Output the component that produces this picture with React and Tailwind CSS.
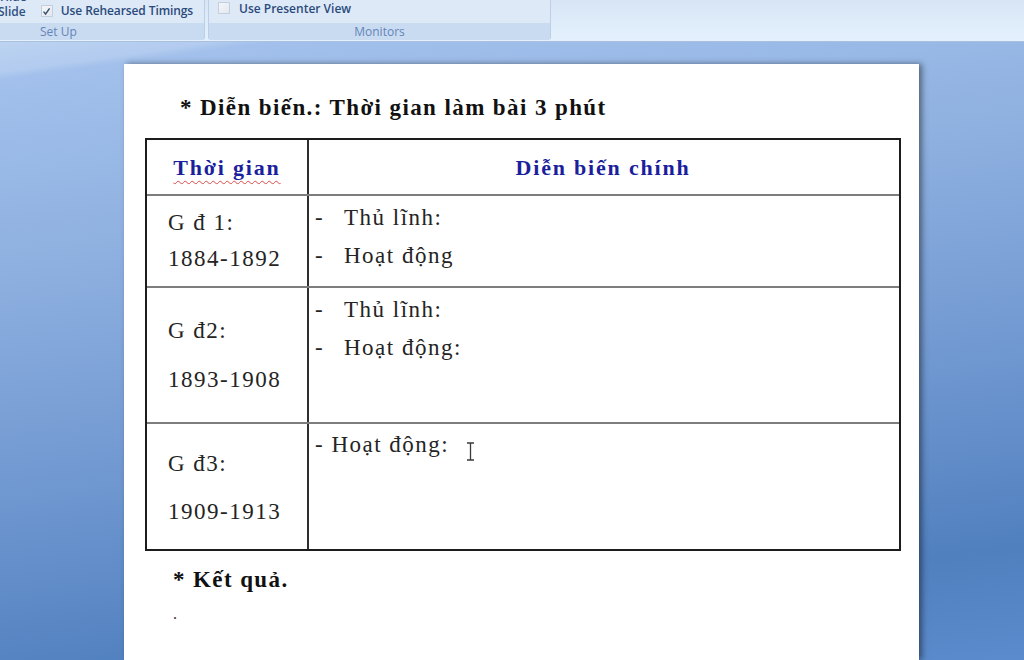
import React from "react";

const serif = { fontFamily: '"Liberation Serif", "Times New Roman", serif' };

function CheckBox({ checked }) {
  return (
    <span className="inline-flex h-[12px] w-[12px] items-center justify-center border border-[#c5cfdc] bg-gradient-to-br from-[#f4f6f9] to-[#e3e8ef]">
      {checked && (
        <svg width="9" height="9" viewBox="0 0 9 9" fill="none">
          <path d="M1.5 4.6 L3.6 7 L7.6 1.4" stroke="#3a4d6a" strokeWidth="1.4" />
        </svg>
      )}
    </span>
  );
}

function Ribbon() {
  return (
    <div
      className="h-[42px] flex bg-gradient-to-b from-[#d8e5f5] to-[#e4f1fd] border-b border-[#a9c0de] text-[12px] text-[#2b4a7c]"
      style={{ fontFamily: '"Open Sans", "Noto Sans", sans-serif' }}
    >
      <div className="w-[205px] h-[40px] flex flex-col border-r border-[#bccfe6] rounded-br-[3px] bg-[#dde9f7] overflow-hidden">
        <div className="h-[23px] flex items-start">
          <div className="flex flex-col leading-[15px] mt-[-11px] font-semibold text-[#30507f]">
            <span>Hide</span>
            <span className="ml-[-2px]">Slide</span>
          </div>
          <div className="flex items-center ml-[14px] mt-[2px]">
            <CheckBox checked />
            <span className="ml-[8px] font-semibold tracking-[-0.1px]">Use Rehearsed Timings</span>
          </div>
        </div>
        <div className="flex-1 bg-[#c9dbf0] pl-[40px] leading-[17px] text-[#6585b8]">Set Up</div>
      </div>
      <div className="w-[3px]" />
      <div className="w-[343px] h-[40px] flex flex-col border-x border-[#bccfe6] rounded-b-[3px] bg-[#dde9f7] overflow-hidden">
        <div className="h-[23px] flex items-start pl-[9px] pt-[2px]">
          <CheckBox />
          <span className="ml-[9px] font-semibold leading-[13px]">Use Presenter View</span>
        </div>
        <div className="flex-1 bg-[#c9dbf0] text-center leading-[17px] text-[#6585b8]">Monitors</div>
      </div>
      <div className="flex-1" />
    </div>
  );
}

function Cursor() {
  return (
    <svg className="absolute left-[157px] top-[18px]" width="9" height="19" viewBox="0 0 9 19" fill="none">
      <path d="M1 1 H8 M4.5 1 V18 M1 18 H8" stroke="#3a3a3a" strokeWidth="1.3" />
    </svg>
  );
}

export default function App() {
  return (
    <div className="w-[1024px] h-[660px] overflow-hidden flex flex-col">
      <Ribbon />
      <div className="flex-1 pl-[124px] pt-[22px] bg-[linear-gradient(172deg,#bcd3f1_0%,#b2cbef_4%,#a2c0eb_5%,#8eb0e0_30%,#6f97d0_60%,#5180bf_85%,#5c8bcd_100%)]">
        <div className="w-[795px] h-full bg-white shadow-[3px_0_6px_rgba(0,0,0,0.45)] text-[#242424]" style={serif}>
          <div className="pt-[30px] pl-[56px] text-[23px] leading-[28px] font-bold tracking-[1.4px] text-[#111]">
            * Diễn biến.: Thời gian làm bài 3 phút
          </div>

          <div className="ml-[21px] mt-[16px] w-[756px] border-2 border-[#1c1c1c]">
            <div className="flex h-[54px] text-[22px] font-bold tracking-[1.8px] text-[#1c1f9c]">
              <div className="w-[162px] border-r-2 border-[#2e2e2e] flex items-center justify-center">
                <span className="underline decoration-wavy decoration-[#e04a4a] decoration-1 underline-offset-[5px]">Thời gian</span>
              </div>
              <div className="flex-1 flex items-center justify-center pr-[2px]">Diễn biến  chính</div>
            </div>

            <div className="flex h-[92px] border-t-2 border-[#7d7d7d] text-[23px] tracking-[1.5px]">
              <div className="w-[162px] border-r-2 border-[#2e2e2e] flex flex-col justify-center pl-[21px] leading-[36px]">
                <span>G đ 1:</span>
                <span>1884-1892</span>
              </div>
              <div className="flex-1 pt-[3px] leading-[37.5px]">
                <div className="flex"><span className="w-[35px] pl-[6px]">-</span>Thủ lĩnh:</div>
                <div className="flex"><span className="w-[35px] pl-[6px]">-</span>Hoạt động</div>
              </div>
            </div>

            <div className="flex h-[136px] border-t-2 border-[#7d7d7d] text-[23px] tracking-[1.5px]">
              <div className="w-[162px] border-r-2 border-[#2e2e2e] flex flex-col justify-center pl-[21px] leading-[49px]">
                <span>G đ2:</span>
                <span>1893-1908</span>
              </div>
              <div className="flex-1 pt-[3px] leading-[37.5px]">
                <div className="flex"><span className="w-[35px] pl-[6px]">-</span>Thủ lĩnh:</div>
                <div className="flex"><span className="w-[35px] pl-[6px]">-</span>Hoạt động:</div>
              </div>
            </div>

            <div className="flex h-[127px] border-t-2 border-[#7d7d7d] text-[23px] tracking-[1.5px]">
              <div className="w-[162px] border-r-2 border-[#2e2e2e] flex flex-col justify-center pl-[21px] pt-[2px] leading-[48px]">
                <span>G đ3:</span>
                <span>1909-1913</span>
              </div>
              <div className="relative flex-1 pt-[2px] pl-[6px] leading-[37.5px]">
                - Hoạt động:
                <Cursor />
              </div>
            </div>
          </div>

          <div className="pl-[49px] mt-[15px] text-[23px] leading-[28px] font-bold tracking-[1.4px] text-[#111]">* Kết quả.</div>
          <div className="pl-[49px] text-[16px] leading-[40px] text-[#333]">.</div>
        </div>
      </div>
    </div>
  );
}
